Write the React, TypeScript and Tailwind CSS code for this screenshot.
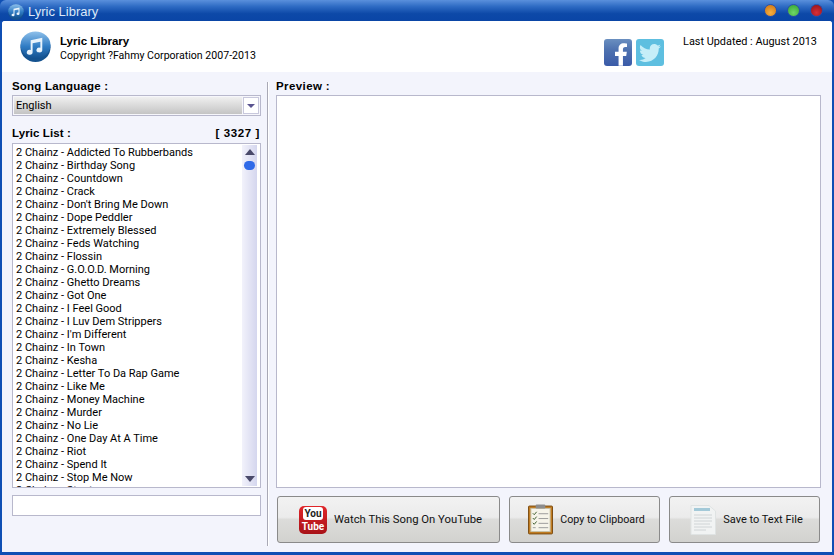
import React from "react";
import { FaFacebookF, FaTwitter } from "react-icons/fa";

const songs = [
  "Addicted To Rubberbands",
  "Birthday Song",
  "Countdown",
  "Crack",
  "Don't Bring Me Down",
  "Dope Peddler",
  "Extremely Blessed",
  "Feds Watching",
  "Flossin",
  "G.O.O.D. Morning",
  "Ghetto Dreams",
  "Got One",
  "I Feel Good",
  "I Luv Dem Strippers",
  "I'm Different",
  "In Town",
  "Kesha",
  "Letter To Da Rap Game",
  "Like Me",
  "Money Machine",
  "Murder",
  "No Lie",
  "One Day At A Time",
  "Riot",
  "Spend It",
  "Stop Me Now",
  "Stunt",
];

const WinDot = ({ color }: { color: string }) => (
  <div
    className={`w-[13px] h-[13px] rounded-full border border-[#2a4fa8] ${color}`}
  />
);

const AppLogo = ({ size }: { size: number }) => (
  <svg width={size} height={size} viewBox="0 0 32 32">
    <defs>
      <linearGradient id={`lg${size}`} x1="0" y1="0" x2="0" y2="1">
        <stop offset="0" stopColor="#8fc0ea" />
        <stop offset="0.55" stopColor="#2f7cc4" />
        <stop offset="1" stopColor="#12508f" />
      </linearGradient>
    </defs>
    <ellipse cx="16" cy="17" rx="15.5" ry="15" fill="#14528f" />
    <ellipse cx="16" cy="14.5" rx="15.5" ry="14" fill={`url(#lg${size})`} />
    <path
      d="M11 9.5 L23 7 V19.5 a3 2.5 0 1 1 -2 -2.3 V11 L13 12.6 V22 a3 2.5 0 1 1 -2 -2.3 Z"
      fill="#e8f3fc"
    />
  </svg>
);

const YouTubeIcon = () => (
  <div className="w-[28px] h-[28px] rounded-[5px] bg-[linear-gradient(to_bottom,#e0262a,#a81218)] flex flex-col items-center justify-between pb-[1px] overflow-hidden font-['Roboto',sans-serif]">
    <div className="w-[20px] h-[13px] mt-[1px] bg-white rounded-[3px] text-[#222] text-[10px] leading-[13px] font-bold text-center">
      You
    </div>
    <div className="text-white text-[10px] leading-[12px] font-bold">Tube</div>
  </div>
);

const ClipboardIcon = () => (
  <svg width="25" height="31" viewBox="0 0 26 31">
    <rect x="0.5" y="1.5" width="25" height="29" rx="1" fill="#c07c22" stroke="#7a4a10" />
    <rect x="3" y="4" width="20" height="24" fill="#f6f4ea" stroke="#c9c2a8" />
    <rect x="8" y="0" width="10" height="4" rx="1" fill="#8d8d8d" />
    <path
      d="M5 9l1.5 1.5L9 7.5M5 14l1.5 1.5L9 12.5M5 19l1.5 1.5L9 17.5"
      stroke="#3a5a2a"
      strokeWidth="1"
      fill="none"
    />
    <path
      d="M11 9.5h10M11 14.5h10M11 19.5h10M11 24h10M5 24h3"
      stroke="#9a9a9a"
      strokeWidth="1"
    />
  </svg>
);

const TextFileIcon = () => (
  <svg width="26" height="30" viewBox="0 0 26 30">
    <path d="M1 0.5H19L25.5 6V29.5H1Z" fill="#f1f3f3" stroke="#dfe3e3" />
    <path d="M4 4.5H20" stroke="#a3c9d8" strokeWidth="3" />
    <path
      d="M4 10h18M4 13h18M4 16h18M4 19h16M4 22h18M4 25h12"
      stroke="#cfd4d6"
      strokeWidth="1"
    />
  </svg>
);

const ActionButton = ({
  icon,
  label,
  className,
}: {
  icon: React.ReactNode;
  label: string;
  className: string;
}) => (
  <button
    className={`h-[47px] flex items-center justify-center gap-[7px] pl-[4px] rounded-[3px] border border-[#8a8a8a] bg-[linear-gradient(to_bottom,#f2f2f2_0%,#ebebeb_45%,#dcdcda_50%,#d2d2cf_100%)] text-[#111] ${className}`}
  >
    {icon}
    <span className="pt-[2px]">{label}</span>
  </button>
);

const App = () => {
  return (
    <div className="w-[834px] h-[555px] flex flex-col overflow-hidden bg-[#0f4fb4] font-['Roboto',sans-serif] text-[11px] text-black">
      {/* title bar */}
      <div className="h-[21px] shrink-0 flex items-center justify-between pl-[8px] pr-[11px] bg-[linear-gradient(to_bottom,#5a90dc_0%,#2f6cc4_30%,#0d49a8_65%,#0a45a6_100%)] rounded-t-[6px]">
        <div className="flex items-center gap-[4px] pt-[2px]">
          <AppLogo size={16} />
          <span className="font-['Liberation_Sans',sans-serif] text-[13px] text-[#dbe8f8]">
            Lyric Library
          </span>
        </div>
        <div className="flex items-center gap-[10px]">
          <WinDot color="bg-[radial-gradient(circle_at_50%_70%,#f8b040,#c87010)]" />
          <WinDot color="bg-[radial-gradient(circle_at_50%_70%,#70d868,#30a030)]" />
          <WinDot color="bg-[radial-gradient(circle_at_50%_70%,#d83038,#901018)]" />
        </div>
      </div>

      {/* window body */}
      <div className="flex-1 min-h-0 mx-[2px] mb-[3px] bg-[#f3f4fc] rounded-t-[3px] flex flex-col overflow-hidden">
        <div className="h-[51px] shrink-0 bg-white flex pl-[18px] pr-[15px]">
          <div className="mt-[10px]">
            <AppLogo size={31} />
          </div>
          <div className="ml-[9px] mt-[13px] leading-[14px]">
            <div className="font-['Liberation_Sans',sans-serif] text-[11.5px] font-bold">
              Lyric Library
            </div>
            <div className="text-[10.6px] pt-[1px]">Copyright ?Fahmy Corporation 2007-2013</div>
          </div>
          <div className="ml-auto flex gap-[4px] mt-[18px] h-[28px]">
            <div className="w-[28px] h-[27px] rounded-[3px] bg-[linear-gradient(to_bottom,#6a8fc0_0%,#4e72b0_40%,#3a5aa8_100%)] flex items-end justify-end pr-[4px] overflow-hidden">
              <FaFacebookF className="text-white w-[14px] h-[23px]" />
            </div>
            <div className="w-[28px] h-[27px] rounded-[3px] bg-[#5ebfe0] flex items-center justify-center overflow-hidden">
              <FaTwitter className="text-[#c5eef8] w-[22px] h-[22px]" />
            </div>
          </div>
          <div className="ml-[19px] mt-[14px] leading-[14px] text-[10.9px]">
            Last Updated : August 2013
          </div>
        </div>

        <div className="flex-1 min-h-0 flex">
          {/* left column */}
          <div className="w-[265px] shrink-0 flex flex-col pl-[10px] pr-[6px] pt-[7px]">
            <div className="h-[14px] leading-[14px] font-['Liberation_Sans',sans-serif] text-[11.5px] font-bold tracking-[0.2px]">
              Song Language :
            </div>
            <div className="mt-[2px] h-[21px] border border-[#b8b8cc] bg-[#f6f6fb] p-[1px] flex">
              <div className="flex-1 px-[2px] leading-[18px] bg-[linear-gradient(to_bottom,#f0f0f0,#c4c4c4)]">
                English
              </div>
              <div className="w-[16px] ml-[1px] border border-[#c8c8dc] bg-white flex items-center justify-center">
                <div className="w-0 h-0 border-x-[4px] border-x-transparent border-t-[4px] border-t-[#5a5490]" />
              </div>
            </div>

            <div className="mt-[10px] h-[14px] leading-[14px] font-['Liberation_Sans',sans-serif] text-[11.5px] font-bold tracking-[0.1px] flex justify-between pr-[1px]">
              <span>Lyric List :</span>
              <span className="tracking-[0.6px]">[ 3327 ]</span>
            </div>
            <div className="mt-[3px] h-[345px] border border-[#b8b8cc] bg-white flex overflow-hidden">
              <div className="flex-1 min-w-0 pl-[3px] pt-[2px] overflow-hidden">
                {songs.map((song) => (
                  <div key={song} className="h-[13px] leading-[13px] whitespace-nowrap">
                    2 Chainz - {song}
                  </div>
                ))}
              </div>
              <div className="w-[15px] mr-[3px] my-[1px] shrink-0 bg-[linear-gradient(to_right,#f2f2fb,#d4d6ee)] flex flex-col items-center">
                <div className="mt-[4px] w-0 h-0 border-x-[5px] border-x-transparent border-b-[6px] border-b-[#4a4a6a]" />
                <div className="mt-[6px] w-[11px] h-[9px] rounded-full bg-[#2f6ae8]" />
                <div className="mt-auto mb-[4px] w-0 h-0 border-x-[5px] border-x-transparent border-t-[6px] border-t-[#4a4a6a]" />
              </div>
            </div>
            <div className="mt-[7px] h-[21px] border border-[#b8b8cc] bg-white" />
          </div>

          {/* divider */}
          <div className="w-[2px] shrink-0 mt-[10px] mb-[6px] bg-[#a9a9b5] border-r border-white" />

          {/* right column */}
          <div className="flex-1 min-w-0 flex flex-col pl-[7px] pr-[11px] pt-[7px]">
            <div className="h-[14px] leading-[14px] font-['Liberation_Sans',sans-serif] text-[11.5px] font-bold tracking-[0.4px]">
              Preview :
            </div>
            <div className="mt-[2px] h-[393px] border border-[#b8b8cc] bg-white" />
            <div className="mt-[8px] flex gap-[9px] pl-[1px] pr-[1px]">
              <ActionButton
                className="w-[223px] text-[11.3px]"
                icon={<YouTubeIcon />}
                label="Watch This Song On YouTube"
              />
              <ActionButton
                className="w-[151px] text-[10.7px]"
                icon={<ClipboardIcon />}
                label="Copy to Clipboard"
              />
              <ActionButton
                className="w-[151px] text-[11px]"
                icon={<TextFileIcon />}
                label="Save to Text File"
              />
            </div>
          </div>
        </div>
      </div>
    </div>
  );
};

export default App;
